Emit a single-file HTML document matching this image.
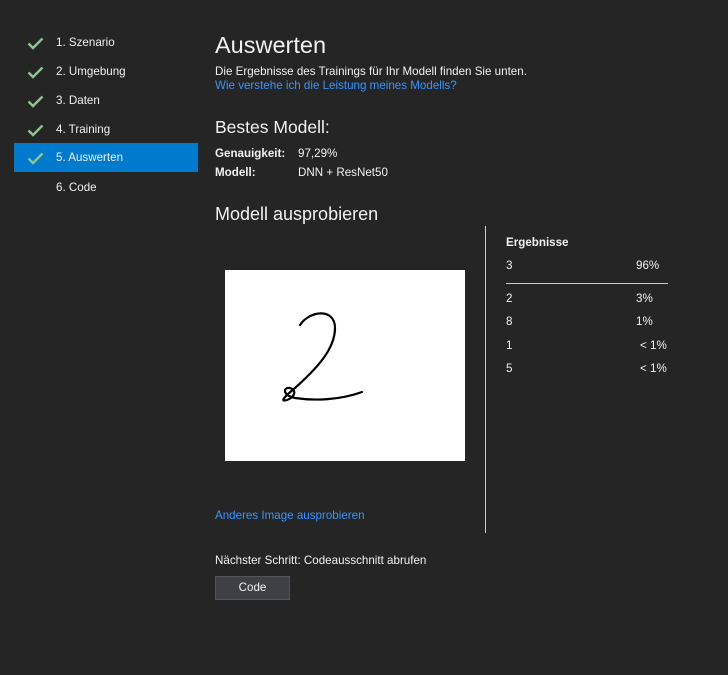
<!DOCTYPE html>
<html><head><meta charset="utf-8"><style>
*{margin:0;padding:0;box-sizing:border-box}
body{width:728px;height:675px;background:#252526;color:#f1f1f1;font-family:"Liberation Sans",sans-serif;font-size:11.6px;position:relative;overflow:hidden}
.a{position:absolute;white-space:nowrap}
.nav{position:absolute;left:14px;width:184px;height:29px;line-height:29px}
.nav span{position:absolute;left:42px;font-size:11.6px}
.nav svg{position:absolute;left:13px;top:9px}
.sel{background:#007acc}
.link{color:#3794ff}
</style></head><body>
<div class="nav" style="top:28px"><svg width="17" height="13" viewBox="0 0 17 13"><path d="M1.5 6.5l4.5 4.5L15.5 1.5" fill="none" stroke="#8fc58f" stroke-width="2.4"/></svg><span>1. Szenario</span></div>
<div class="nav" style="top:57px"><svg width="17" height="13" viewBox="0 0 17 13"><path d="M1.5 6.5l4.5 4.5L15.5 1.5" fill="none" stroke="#8fc58f" stroke-width="2.4"/></svg><span>2. Umgebung</span></div>
<div class="nav" style="top:86px"><svg width="17" height="13" viewBox="0 0 17 13"><path d="M1.5 6.5l4.5 4.5L15.5 1.5" fill="none" stroke="#8fc58f" stroke-width="2.4"/></svg><span>3. Daten</span></div>
<div class="nav" style="top:115px"><svg width="17" height="13" viewBox="0 0 17 13"><path d="M1.5 6.5l4.5 4.5L15.5 1.5" fill="none" stroke="#8fc58f" stroke-width="2.4"/></svg><span>4. Training</span></div>
<div class="nav sel" style="top:143px"><svg width="17" height="13" viewBox="0 0 17 13"><path d="M1.5 6.5l4.5 4.5L15.5 1.5" fill="none" stroke="#8fc58f" stroke-width="2.4"/></svg><span>5. Auswerten</span></div>
<div class="nav" style="top:173px"><span>6. Code</span></div>

<div class="a" style="left:215px;top:32px;font-size:23.5px">Auswerten</div>
<div class="a" style="left:215px;top:65px">Die Ergebnisse des Trainings für Ihr Modell finden Sie unten.</div>
<div class="a link" style="left:215px;top:79px">Wie verstehe ich die Leistung meines Modells?</div>
<div class="a" style="left:215px;top:117px;font-size:17.5px">Bestes Modell:</div>
<div class="a" style="left:215px;top:147px;font-weight:bold">Genauigkeit:</div>
<div class="a" style="left:298px;top:147px">97,29%</div>
<div class="a" style="left:215px;top:166px;font-weight:bold">Modell:</div>
<div class="a" style="left:298px;top:166px">DNN + ResNet50</div>
<div class="a" style="left:215px;top:204px;font-size:18px">Modell ausprobieren</div>

<div class="a" style="left:225px;top:270px;width:240px;height:191px;background:#fff">
<svg width="240" height="191" viewBox="0 0 240 191"><path d="M75 55C85 40 110 38 110 58C110 80 90 100 70 118C58 128 55 132 62 130C70 127 72 120 65 118C58 117 57 125 70 128C90 131 115 130 137 122" fill="none" stroke="#000" stroke-width="2.2" stroke-linecap="round"/></svg>
</div>
<div class="a link" style="left:215px;top:509px">Anderes Image ausprobieren</div>
<div class="a" style="left:485px;top:226px;width:1px;height:307px;background:#ccc"></div>

<div class="a" style="left:506px;top:236px;font-weight:bold">Ergebnisse</div>
<div class="a" style="left:506px;top:259px">3</div><div class="a" style="left:636px;top:259px">96%</div>
<div class="a" style="left:506px;top:283px;width:162px;height:1px;background:#ccc"></div>
<div class="a" style="left:506px;top:292px">2</div><div class="a" style="left:636px;top:292px">3%</div>
<div class="a" style="left:506px;top:315px">8</div><div class="a" style="left:636px;top:315px">1%</div>
<div class="a" style="left:506px;top:339px">1</div><div class="a" style="left:640px;top:339px">&lt; 1%</div>
<div class="a" style="left:506px;top:362px">5</div><div class="a" style="left:640px;top:362px">&lt; 1%</div>

<div class="a" style="left:215px;top:554px">Nächster Schritt: Codeausschnitt abrufen</div>
<div class="a" style="left:215px;top:576px;width:75px;height:24px;background:#3f3f46;border:1px solid #555;text-align:center;line-height:22px">Code</div>
</body></html>
